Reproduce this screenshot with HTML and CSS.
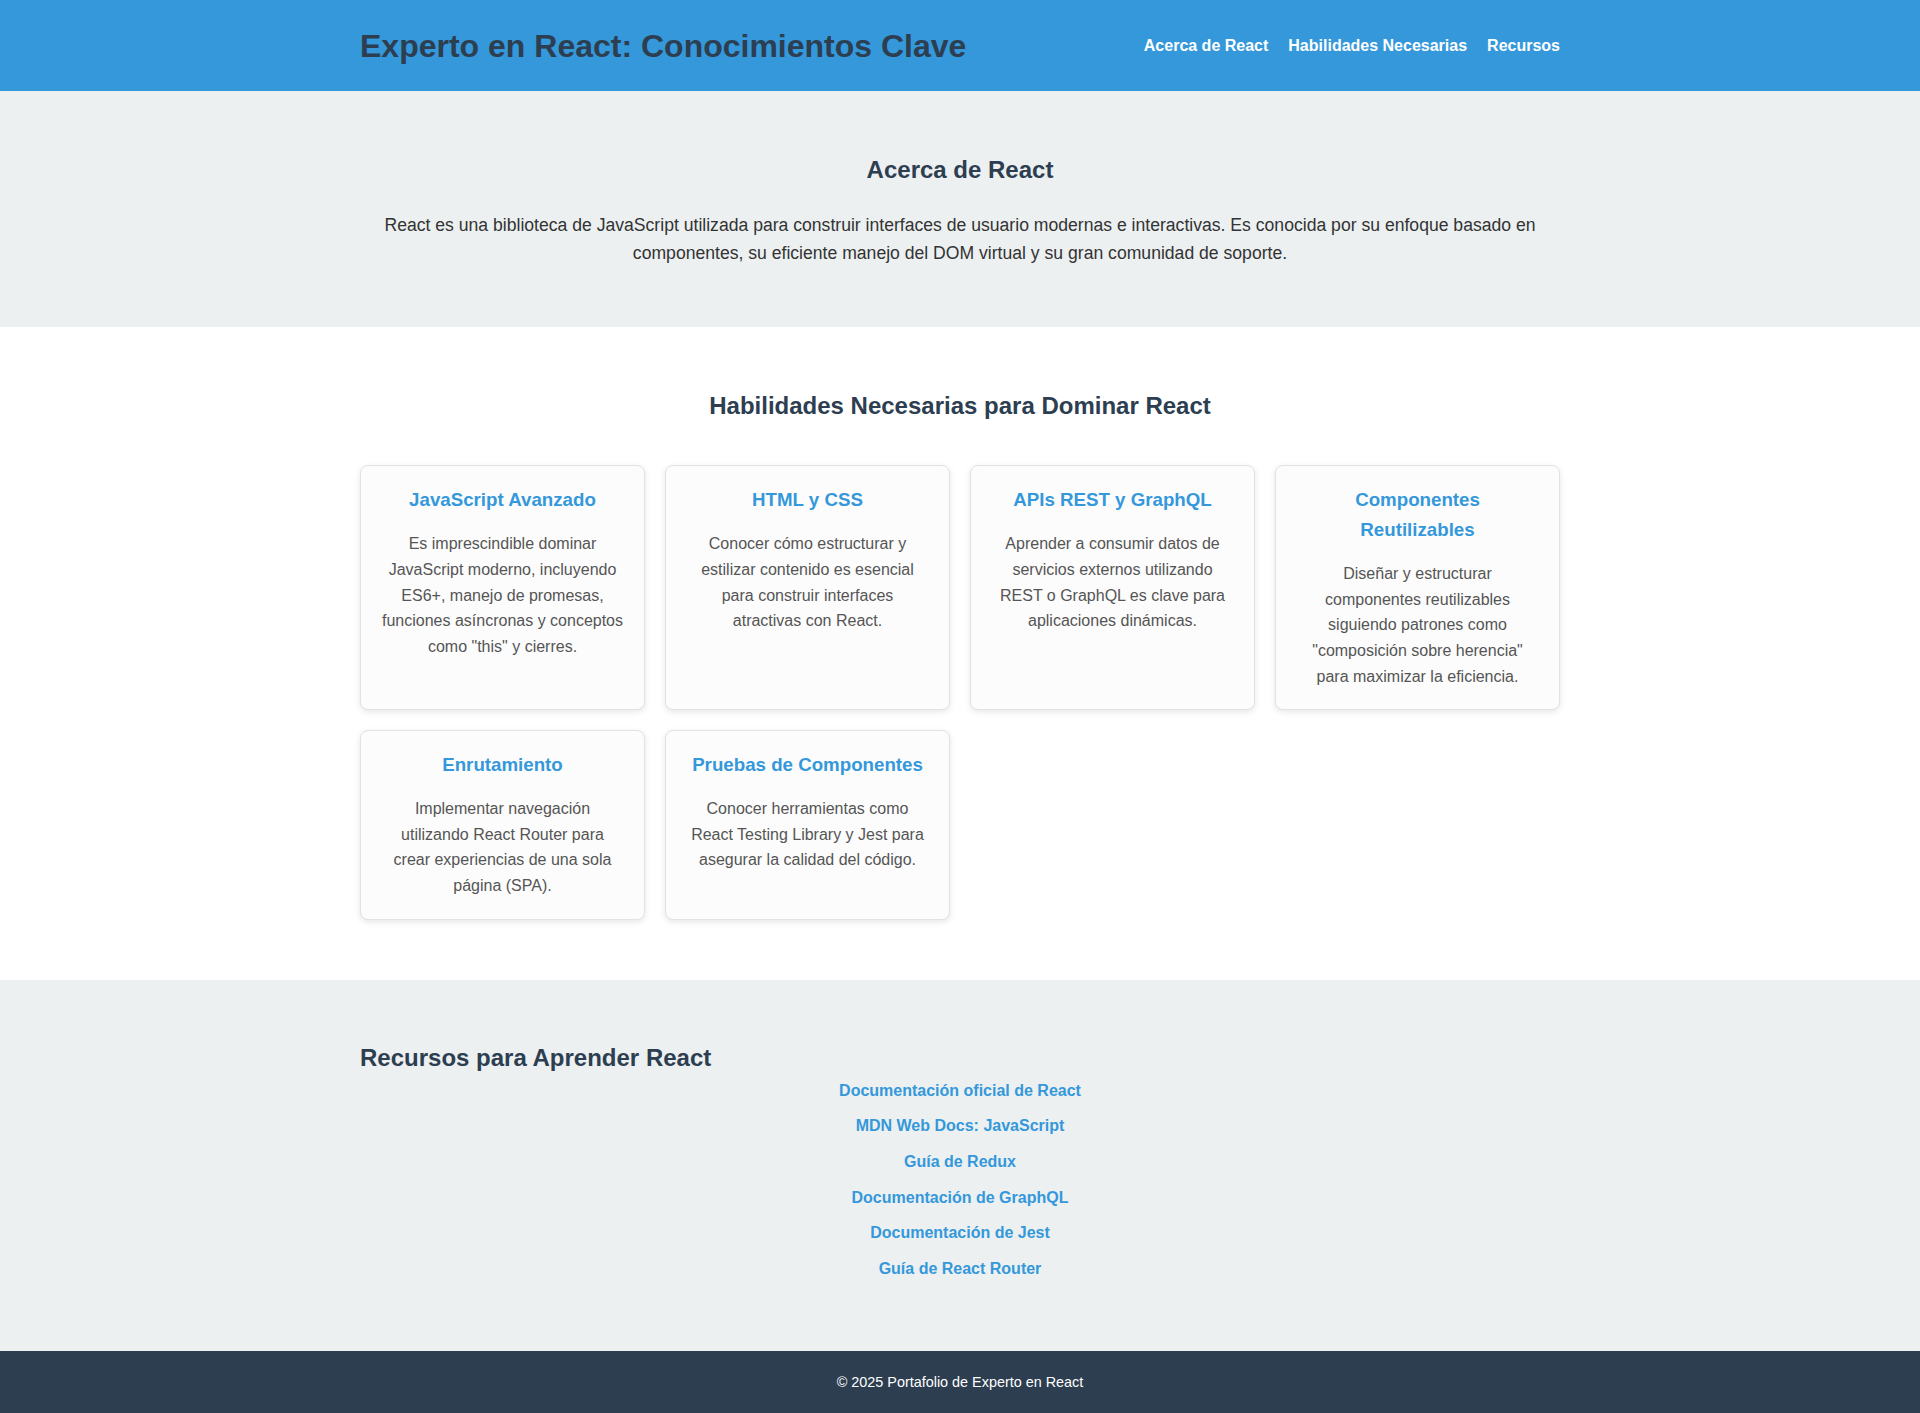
FILE: index.html
```html
<!DOCTYPE html>
<html lang="es">
<head>
<meta charset="utf-8">
<title>Experto en React: Conocimientos Clave</title>
<link rel="stylesheet" href="styles.css">
</head>
<body>
<header class="site-header">
  <div class="container header-inner">
    <h1 class="site-title">Experto en React: Conocimientos Clave</h1>
    <nav class="nav">
      <a href="#acerca">Acerca de React</a>
      <a href="#habilidades">Habilidades Necesarias</a>
      <a href="#recursos">Recursos</a>
    </nav>
  </div>
</header>

<section id="acerca" class="section section-alt about">
  <div class="container">
    <h2 class="section-title">Acerca de React</h2>
    <p class="about-text">React es una biblioteca de JavaScript utilizada para construir interfaces de usuario modernas e interactivas. Es conocida por su enfoque basado en componentes, su eficiente manejo del DOM virtual y su gran comunidad de soporte.</p>
  </div>
</section>

<section id="habilidades" class="section skills">
  <div class="container">
    <h2 class="section-title">Habilidades Necesarias para Dominar React</h2>
    <div class="skills-grid">
      <div class="card">
        <h3>JavaScript Avanzado</h3>
        <p>Es imprescindible dominar JavaScript moderno, incluyendo ES6+, manejo de promesas, funciones asíncronas y conceptos como "this" y cierres.</p>
      </div>
      <div class="card">
        <h3>HTML y CSS</h3>
        <p>Conocer cómo estructurar y estilizar contenido es esencial para construir interfaces atractivas con React.</p>
      </div>
      <div class="card">
        <h3>APIs REST y GraphQL</h3>
        <p>Aprender a consumir datos de servicios externos utilizando REST o GraphQL es clave para aplicaciones dinámicas.</p>
      </div>
      <div class="card">
        <h3>Componentes Reutilizables</h3>
        <p>Diseñar y estructurar componentes reutilizables siguiendo patrones como "composición sobre herencia" para maximizar la eficiencia.</p>
      </div>
      <div class="card">
        <h3>Enrutamiento</h3>
        <p>Implementar navegación utilizando React Router para crear experiencias de una sola página (SPA).</p>
      </div>
      <div class="card">
        <h3>Pruebas de Componentes</h3>
        <p>Conocer herramientas como React Testing Library y Jest para asegurar la calidad del código.</p>
      </div>
    </div>
  </div>
</section>

<section id="recursos" class="section section-alt resources">
  <div class="container">
    <h2 class="resources-title">Recursos para Aprender React</h2>
    <ul class="resource-list">
      <li><a href="#">Documentación oficial de React</a></li>
      <li><a href="#">MDN Web Docs: JavaScript</a></li>
      <li><a href="#">Guía de Redux</a></li>
      <li><a href="#">Documentación de GraphQL</a></li>
      <li><a href="#">Documentación de Jest</a></li>
      <li><a href="#">Guía de React Router</a></li>
    </ul>
  </div>
</section>

<footer class="site-footer">
  <p>© 2025 Portafolio de Experto en React</p>
</footer>
</body>
</html>
```

FILE: styles.css
```css
* {
  box-sizing: border-box;
}

html, body {
  margin: 0;
  padding: 0;
}

body {
  font-family: "Liberation Sans", Arial, sans-serif;
  font-size: 16px;
  line-height: 1.6;
  color: #333;
  background: #fff;
}

.container {
  max-width: 1200px;
  margin: 0 auto;
}

/* Header */
.site-header {
  background: #3498db;
  padding: 19.5px 0;
}

.header-inner {
  display: flex;
  align-items: center;
  justify-content: space-between;
}

.site-title {
  margin: 0;
  font-size: 32px;
  line-height: 52px;
  font-weight: bold;
  color: #2c3e50;
}

.nav {
  display: flex;
  gap: 20px;
}

.nav a {
  color: #fff;
  text-decoration: none;
  font-weight: bold;
  font-size: 16px;
}

/* Sections */
.section {
  padding: 40px 0;
}

.section-alt {
  background: #ecf0f1;
}

.section-title {
  text-align: center;
  font-size: 24px;
  color: #2c3e50;
  margin: 19.92px 0;
}

.about-text {
  text-align: center;
  font-size: 17.6px;
  margin: 21.5px 0 20px;
  color: #333;
}

/* Skills */
.skills-grid {
  display: grid;
  grid-template-columns: repeat(4, 1fr);
  gap: 20px;
  margin: 40px 0 20px;
}

.card {
  background: #fcfcfc;
  border: 1px solid #e2e2e2;
  border-radius: 8px;
  padding: 19px 20px 20px;
  text-align: center;
  box-shadow: 0 2px 6px rgba(0, 0, 0, 0.1);
}

.card h3 {
  margin: 0 0 16px;
  font-size: 18.72px;
  color: #3498db;
}

.card p {
  margin: 0;
  color: #555;
}

/* Resources */
.resources-title {
  font-size: 24px;
  color: #2c3e50;
  margin: 19.92px 0 0;
}

.resource-list {
  list-style: none;
  margin: 0 0 30px;
  padding: 0;
  text-align: center;
}

.resource-list li {
  margin-bottom: 10px;
}

.resource-list a {
  color: #3498db;
  font-weight: bold;
  text-decoration: none;
}

/* Footer */
.site-footer {
  background: #2c3e50;
  color: #fff;
  text-align: center;
  padding: 20px 0;
}

.site-footer p {
  margin: 0;
  font-size: 14.4px;
}
```
